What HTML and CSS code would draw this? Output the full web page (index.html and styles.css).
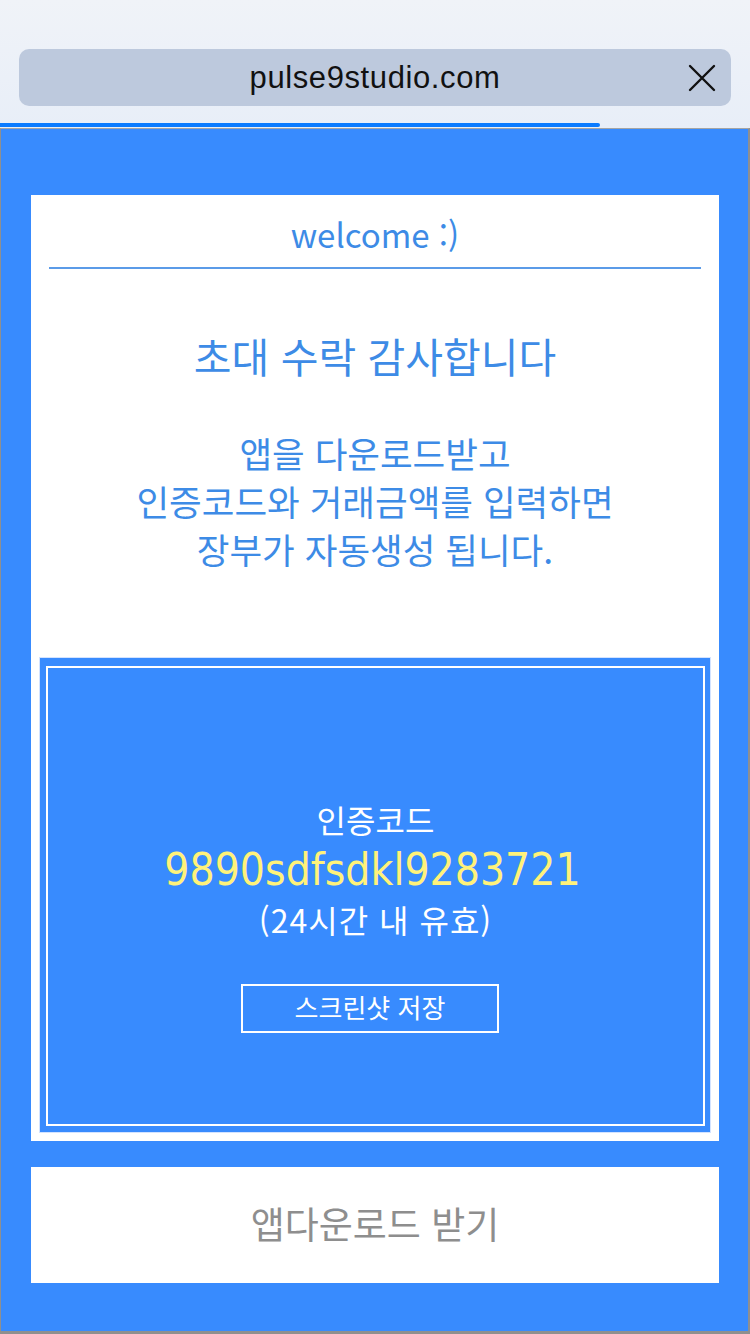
FILE: index.html
```html
<!DOCTYPE html>
<html lang="ko">
<head>
<meta charset="utf-8">
<title>pulse9studio</title>
<link rel="stylesheet" href="styles.css">
</head>
<body>
<div class="screen">
  <header class="browser">
    <div class="address">
      <span class="url">pulse9studio.com</span>
      <svg class="close" width="28" height="28" viewBox="0 0 28 28" aria-hidden="true">
        <path d="M2 2 L26 26 M26 2 L2 26" stroke="#111" stroke-width="2.4" stroke-linecap="round" fill="none"/>
      </svg>
    </div>
    <div class="progress"></div>
  </header>
  <main class="page">
    <section class="card">
      <h2 class="welcome">welcome :)</h2>
      <h1 class="title">초대 수락 감사합니다</h1>
      <p class="desc">앱을 다운로드받고<br>인증코드와 거래금액를 입력하면<br>장부가 자동생성 됩니다.</p>
      <div class="codebox">
        <div class="codeinner">
          <div class="code-label">인증코드</div>
          <div class="code-value">9890sdfsdkl9283721</div>
          <div class="code-valid">(24시간 내 유효)</div>
          <button class="shot">스크린샷 저장</button>
        </div>
      </div>
    </section>
    <button class="download">앱다운로드 받기</button>
  </main>
</div>
</body>
</html>
```
FILE: styles.css
```css
* { box-sizing: border-box; }
html, body {
  margin: 0;
  padding: 0;
  width: 750px;
  height: 1334px;
  overflow: hidden;
  font-family: "Noto Sans CJK KR", "Noto Sans", sans-serif;
}
.screen {
  display: flex;
  flex-direction: column;
  height: 1334px;
}
.browser {
  height: 128px;
  background: linear-gradient(#f0f3f8, #e8eef8);
  padding-top: 49px;
  display: flex;
  flex-direction: column;
}
.address {
  margin: 0 19px 0 19px;
  height: 57px;
  background: #bdc9dd;
  border-radius: 10px;
  display: flex;
  align-items: center;
  justify-content: center;
  position: relative;
}
.url {
  font-family: "Liberation Sans", Arial, sans-serif;
  font-size: 31px;
  letter-spacing: 0.6px;
  color: #111;
  margin-top: 1px;
}
.close {
  position: absolute;
  right: 15px;
  top: 15px;
}
.progress {
  margin-top: 17px;
  width: 600px;
  height: 4px;
  background: #0a7bff;
  border-radius: 0 2px 2px 0;
}
.page {
  flex: 1;
  background: #388bfe;
  border-top: 1px solid #a4a4a4;
  border-left: 1px solid #8f8f8f;
  border-right: 2px solid #8f8f8f;
  border-bottom: 3px solid #8f8f8f;
  padding: 66px 29px 0 30px;
  display: flex;
  flex-direction: column;
}
.card {
  background: #fff;
  padding: 0 8px 8px;
  display: flex;
  flex-direction: column;
  align-items: center;
  color: #3d8be6;
}
.welcome {
  margin: 0;
  width: 652px;
  height: 74px;
  border-bottom: 2px solid #5b9be8;
  font-weight: 400;
  font-size: 33px;
  line-height: 78px;
  text-align: center;
}
.title {
  margin: 62px 0 0;
  font-weight: 400;
  font-size: 41px;
  line-height: 48px;
  text-align: center;
}
.desc {
  margin: 50px 0 0;
  font-size: 35.5px;
  line-height: 48px;
  text-align: center;
}
.codebox {
  margin-top: 84px;
  width: 672px;
  background: #388bfe;
  border: 1px solid #d3e3ff;
  padding: 8px 5px 6px 6px;
}
.codeinner {
  height: 460px;
  border: 2px solid #fff;
  display: flex;
  flex-direction: column;
  align-items: center;
  padding-top: 131px;
  color: #fff;
}
.code-label {
  font-size: 32px;
  line-height: 40px;
}
.code-value {
  font-family: "DejaVu Sans Condensed", "DejaVu Sans", sans-serif;
  font-size: 44px;
  line-height: 54px;
  color: #fff27a;
  margin: 4px 6px 0 0;
}
.code-valid {
  font-size: 32px;
  letter-spacing: 1px;
  line-height: 44px;
}
.shot {
  margin: 43px 11px 0 0;
  width: 258px;
  height: 49px;
  background: transparent;
  border: 2px solid #fff;
  color: #fff;
  font-family: inherit;
  font-size: 26px;
  line-height: 40px;
  padding: 0 0 4px;
}
.download {
  margin-top: 26px;
  height: 116px;
  width: 688px;
  background: #fff;
  border: 0;
  color: #8e8e8e;
  font-family: inherit;
  font-size: 37px;
  padding: 0 0 4px;
}
```
